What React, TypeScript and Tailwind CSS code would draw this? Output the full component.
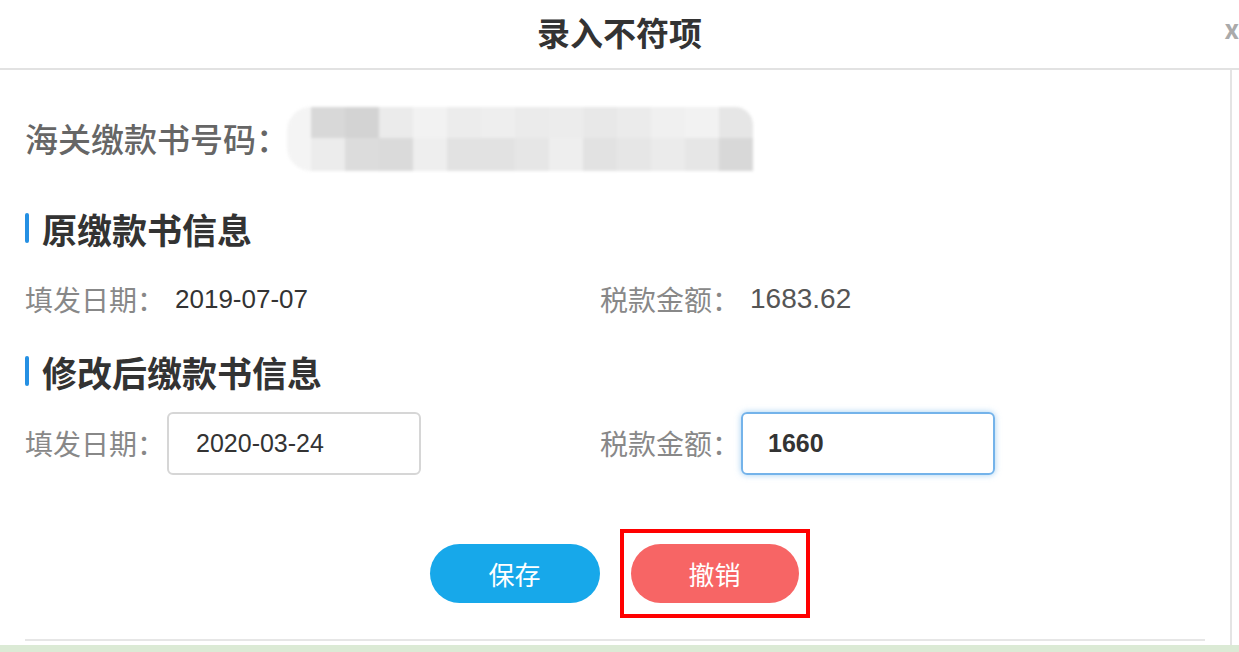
import { useState } from "react";

// mosaic blocks hiding the customs payment number
const mosaicTop = [
  "bg-[#d8d8d8]", "bg-[#d3d3d3]", "bg-[#ebebeb]", "bg-[#f2f2f2]", "bg-[#ececec]", "bg-[#eeeeee]", "bg-[#ebebeb]",
  "bg-[#ececec]", "bg-[#e8e8e8]", "bg-[#ebebeb]", "bg-[#f0f0f0]", "bg-[#f2f2f2]", "bg-[#e6e6e6]",
];
const mosaicBottom = [
  "bg-[#ececec]", "bg-[#dcdcdc]", "bg-[#dadada]", "bg-[#eeeeee]", "bg-[#e2e2e2]", "bg-[#e2e2e2]", "bg-[#e6e6e6]",
  "bg-[#eeeeee]", "bg-[#e2e2e2]", "bg-[#e6e6e6]", "bg-[#ebebeb]", "bg-[#e6e6e6]", "bg-[#d8d8d8]",
];

const latin = { fontFamily: '"Liberation Sans", sans-serif' };

function SectionTitle({ children }: { children: string }) {
  return (
    <div className="flex items-center h-[36px]">
      <span className="w-[4px] h-[30px] bg-[#2590e3] rounded-sm" />
      <span className="ml-[13px] text-[35px] font-bold text-[#333] leading-none">{children}</span>
    </div>
  );
}

export default function App() {
  const [date, setDate] = useState("2020-03-24");
  const [amount, setAmount] = useState("1660");

  return (
    <div
      className="w-[1239px] h-[652px] bg-white flex flex-col overflow-hidden"
      style={{ fontFamily: '"Noto Sans CJK SC", "Liberation Sans", sans-serif' }}
    >
      {/* Header */}
      <div className="relative h-[70px] shrink-0 flex items-center justify-center border-b-2 border-[#e2e2e2]">
        <h1 className="text-[33px] font-bold text-[#333] leading-none -mt-[4px]">录入不符项</h1>
        <span className="absolute right-[0px] top-[15px] text-[26px] font-bold text-[#aaa] leading-none">x</span>
      </div>

      {/* Body */}
      <div className="flex-1 flex">
        <div className="w-[1232px] border-r-2 border-[#e4e4e4] flex flex-col pl-[25px]">
          <div className="flex items-center mt-[37px] h-[64px]">
            <span className="text-[33px] text-[#666] font-medium whitespace-nowrap">海关缴款书号码：</span>
            <div className="ml-[-2px] flex items-stretch blur-[1.5px]">
              <div className="w-[24px] bg-[#f4f4f4] rounded-l-full" />
              <div className="flex flex-col">
                <div className="flex">
                  {mosaicTop.map((c, i) => (
                    <div key={i} className={`w-[34px] h-[31px] ${c} ${i === 12 ? "rounded-tr-[18px]" : ""}`} />
                  ))}
                </div>
                <div className="flex">
                  {mosaicBottom.map((c, i) => (
                    <div key={i} className={`w-[34px] h-[33px] ${c}`} />
                  ))}
                </div>
              </div>
            </div>
          </div>

          <div className="mt-[39px]">
            <SectionTitle>原缴款书信息</SectionTitle>
          </div>

          <div className="flex items-center mt-[37px] h-[32px]">
            <div className="w-[575px] flex items-center">
              <span className="text-[28px] text-[#888]">填发日期：</span>
              <span className="ml-[10px] text-[26px] text-[#333]" style={latin}>
                2019-07-07
              </span>
            </div>
            <div className="flex items-center">
              <span className="text-[28px] text-[#888]">税款金额：</span>
              <span className="ml-[10px] text-[28px] text-[#555]" style={latin}>
                1683.62
              </span>
            </div>
          </div>

          <div className="mt-[38px]">
            <SectionTitle>修改后缴款书信息</SectionTitle>
          </div>

          <div className="flex items-center mt-[23px] h-[62px]">
            <div className="w-[575px] flex items-center">
              <span className="text-[28px] text-[#888]">填发日期：</span>
              <input
                value={date}
                onChange={(e) => setDate(e.target.value)}
                className="ml-[2px] w-[254px] h-[63px] rounded-[6px] border-2 border-[#d6d6d6] px-[27px] text-[25px] text-[#333] outline-none"
                style={latin}
              />
            </div>
            <div className="flex items-center">
              <span className="text-[28px] text-[#888]">税款金额：</span>
              <input
                value={amount}
                onChange={(e) => setAmount(e.target.value)}
                className="ml-[1px] w-[254px] h-[63px] rounded-[6px] border-2 border-[#74b3ea] shadow-[0_0_6px_rgba(102,175,233,0.6)] px-[25px] text-[25px] font-bold text-[#333] outline-none"
                style={latin}
              />
            </div>
          </div>

          <div className="flex items-center justify-center gap-[20px] mt-[55px] pl-[9px] ml-[-25px]">
            <button className="w-[170px] h-[59px] rounded-full bg-[#17a8ea] text-white text-[26px]">保存</button>
            <div className="border-[4px] border-[#ff0000] px-[7px] py-[11px]">
              <button className="w-[168px] h-[59px] rounded-full bg-[#f76565] text-white text-[26px] block">撤销</button>
            </div>
          </div>

          <div className="mt-[21px] mr-[25px] h-[2px] bg-[#e6e6e6]" />
        </div>
      </div>

      {/* status strip */}
      <div className="h-[7px] shrink-0 bg-[#dbead5]" />
    </div>
  );
}
